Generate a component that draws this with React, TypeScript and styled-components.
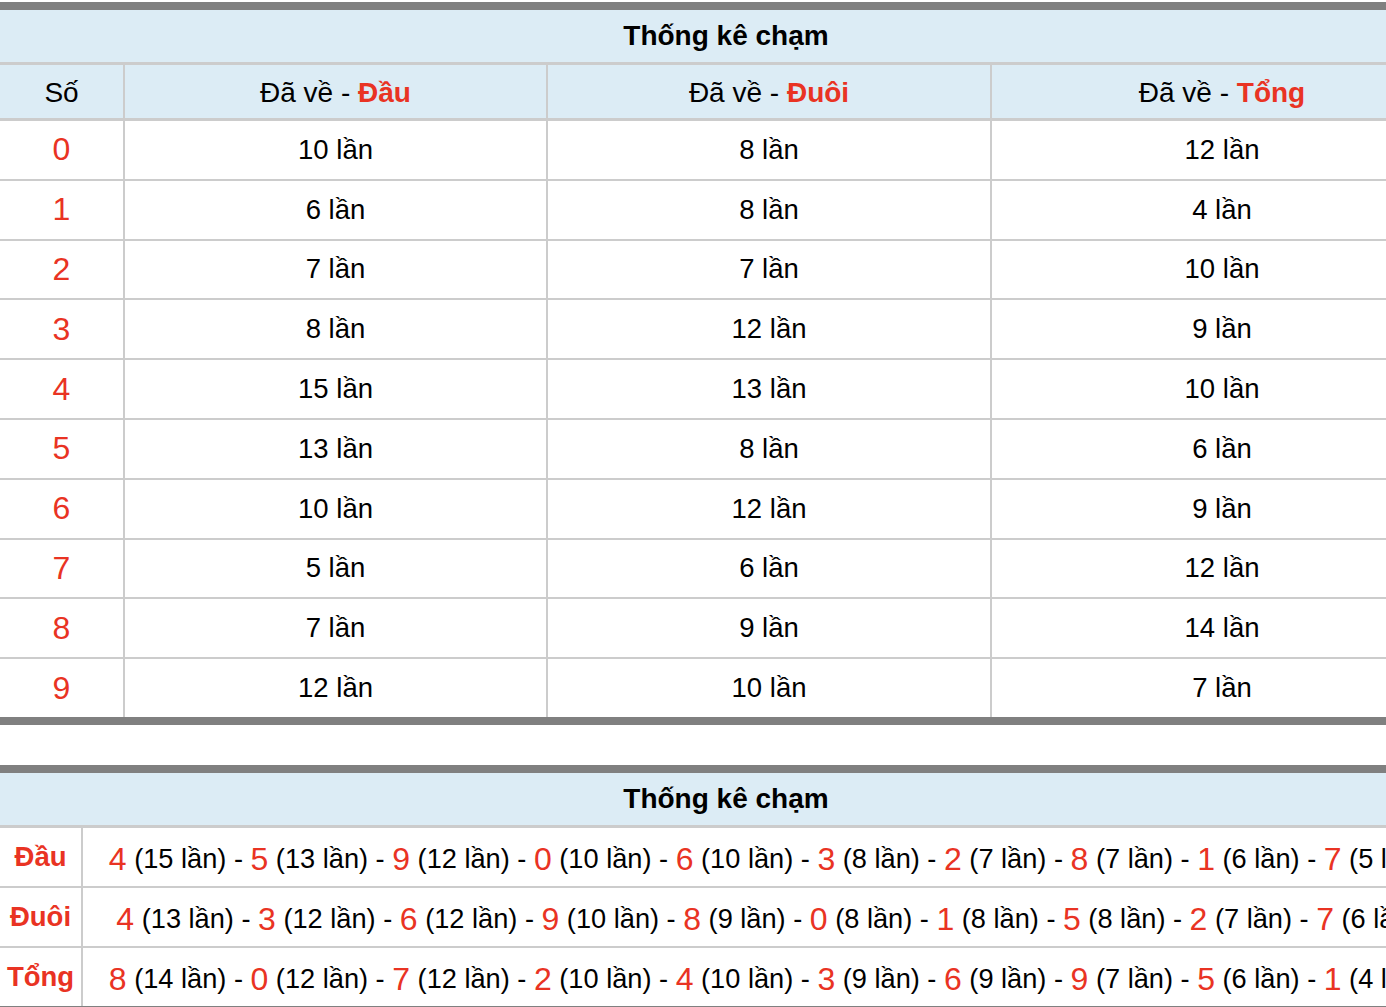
import React from "react";
import styled, { createGlobalStyle } from "styled-components";

const GlobalStyle = createGlobalStyle`
  html, body {
    margin: 0;
    padding: 0;
    background: #fff;
    overflow: hidden;
  }
  body {
    font-family: "Liberation Sans", Arial, Helvetica, sans-serif;
    color: #000;
  }
`;

const RED = "#e93323";

const heads = [
  [0, 10, 8, 12],
  [1, 6, 8, 4],
  [2, 7, 7, 10],
  [3, 8, 12, 9],
  [4, 15, 13, 10],
  [5, 13, 8, 6],
  [6, 10, 12, 9],
  [7, 5, 6, 12],
  [8, 7, 9, 14],
  [9, 12, 10, 7],
];

const summary: { label: string; items: [number, number][] }[] = [
  {
    label: "Đầu",
    items: [
      [4, 15], [5, 13], [9, 12], [0, 10], [6, 10],
      [3, 8], [2, 7], [8, 7], [1, 6], [7, 5],
    ],
  },
  {
    label: "Đuôi",
    items: [
      [4, 13], [3, 12], [6, 12], [9, 10], [8, 9],
      [0, 8], [1, 8], [5, 8], [2, 7], [7, 6],
    ],
  },
  {
    label: "Tổng",
    items: [
      [8, 14], [0, 12], [7, 12], [2, 10], [4, 10],
      [3, 9], [6, 9], [9, 7], [5, 6], [1, 4],
    ],
  },
];

function App() {
  return (
    <>
      <GlobalStyle />
      <Page>
        <Board>
          <Title>Thống kê chạm</Title>
          <Grid>
            <HeadRow>
              <HeadCell>Số</HeadCell>
              <HeadCell>
                Đã về - <Accent>Đầu</Accent>
              </HeadCell>
              <HeadCell>
                Đã về - <Accent>Đuôi</Accent>
              </HeadCell>
              <HeadCell>
                Đã về - <Accent>Tổng</Accent>
              </HeadCell>
            </HeadRow>
            {heads.map(([n, a, b, c]) => (
              <DataRow key={n}>
                <Cell>
                  <Digit>{n}</Digit>
                </Cell>
                <Cell>{a} lần</Cell>
                <Cell>{b} lần</Cell>
                <Cell>{c} lần</Cell>
              </DataRow>
            ))}
          </Grid>
        </Board>

        <Board $gap>
          <Title>Thống kê chạm</Title>
          <Grid>
            {summary.map((row) => (
              <SumRow key={row.label}>
                <Label>{row.label}</Label>
                <SumCell>
                  {row.items.map(([n, t], i) => (
                    <React.Fragment key={n}>
                      {i > 0 && " - "}
                      <Digit>{n}</Digit> ({t} lần)
                    </React.Fragment>
                  ))}
                </SumCell>
              </SumRow>
            ))}
          </Grid>
        </Board>
      </Page>
    </>
  );
}

const Page = styled.div`
  width: 1452px;
  padding-top: 2px;
`;

const Board = styled.section<{ $gap?: boolean }>`
  border-top: 8px solid #808080;
  border-bottom: 8px solid #808080;
  margin-top: ${(p) => (p.$gap ? "40px" : "0")};
`;

const Title = styled.div`
  height: 52px;
  display: flex;
  align-items: center;
  justify-content: center;
  background: #dcecf5;
  font-size: 28px;
  font-weight: 700;
  border-bottom: 3px solid #cccccc;
`;

const Grid = styled.div`
  display: flex;
  flex-direction: column;
  gap: 2px;
  background: #cccccc;
`;

const HeadRow = styled.div`
  display: grid;
  grid-template-columns: 123px 421px 442px 1fr;
  column-gap: 2px;
  height: 53px;
  border-bottom: 1px solid #cccccc;
`;

const DataRow = styled.div`
  display: grid;
  grid-template-columns: 123px 421px 442px 1fr;
  column-gap: 2px;
  height: 57.8px;
`;

const HeadCell = styled.div`
  display: flex;
  align-items: center;
  justify-content: center;
  background: #dcecf5;
  font-size: 28px;
  padding-top: 2px;
  white-space: pre;
`;

const Cell = styled.div`
  display: flex;
  align-items: center;
  justify-content: center;
  background: #fff;
  font-size: 27.5px;
  white-space: pre;
`;

const Accent = styled.b`
  color: ${RED};
  font-weight: 700;
`;

const Digit = styled.span`
  color: ${RED};
  font-size: 32px;
`;

const SumRow = styled.div`
  display: grid;
  grid-template-columns: 81px 1fr;
  column-gap: 2px;
  height: 58px;
`;

const Label = styled.div`
  display: flex;
  align-items: center;
  justify-content: center;
  background: #fff;
  color: ${RED};
  font-size: 27.5px;
  font-weight: 700;
`;

const SumCell = styled.div`
  display: flex;
  align-items: center;
  justify-content: center;
  background: #fff;
  font-size: 27.2px;
  padding-top: 5px;
  white-space: pre;
`;

export default App;
